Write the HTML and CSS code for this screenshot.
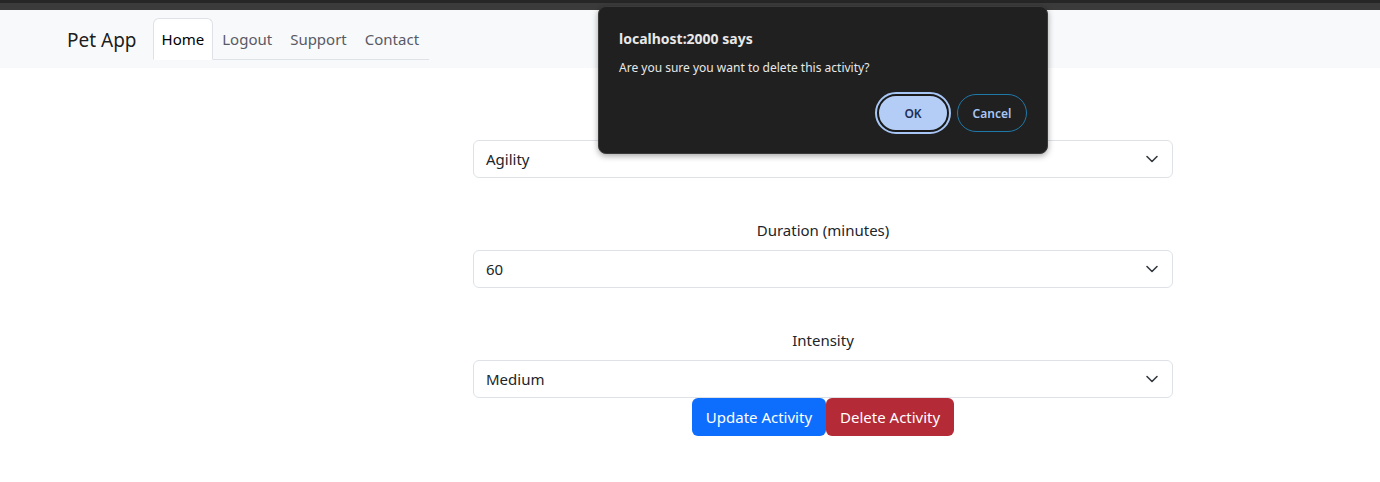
FILE: index.html
```html
<!DOCTYPE html>
<html>
<head>
<meta charset="utf-8">
<link rel="stylesheet" href="styles.css">
</head>
<body>
<div class="chrome"></div>
<nav class="navbar">
  <span class="brand">Pet App</span>
  <ul class="tabs">
    <li class="tab active">Home</li>
    <li class="tab">Logout</li>
    <li class="tab">Support</li>
    <li class="tab">Contact</li>
  </ul>
</nav>
<main class="form">
  <label class="label">Activity</label>
  <div class="select">Agility<svg class="chev" viewBox="0 0 16 16" width="16" height="16"><path d="M3 5.5l5 5 5-5" fill="none" stroke="#343a40" stroke-width="1.6" stroke-linecap="round" stroke-linejoin="round"/></svg></div>
  <label class="label">Duration (minutes)</label>
  <div class="select">60<svg class="chev" viewBox="0 0 16 16" width="16" height="16"><path d="M3 5.5l5 5 5-5" fill="none" stroke="#343a40" stroke-width="1.6" stroke-linecap="round" stroke-linejoin="round"/></svg></div>
  <label class="label">Intensity</label>
  <div class="select last">Medium<svg class="chev" viewBox="0 0 16 16" width="16" height="16"><path d="M3 5.5l5 5 5-5" fill="none" stroke="#343a40" stroke-width="1.6" stroke-linecap="round" stroke-linejoin="round"/></svg></div>
  <div class="buttons">
    <button class="btn primary">Update Activity</button>
    <button class="btn danger">Delete Activity</button>
  </div>
</main>
<div class="dialog">
  <div class="d-title">localhost:2000 says</div>
  <div class="d-msg">Are you sure you want to delete this activity?</div>
  <div class="d-actions">
    <button class="d-btn ok">OK</button>
    <button class="d-btn cancel">Cancel</button>
  </div>
</div>
</body>
</html>
```

FILE: styles.css
```css
* { box-sizing: border-box; }
body {
  margin: 0;
  font-family: "Noto Sans", "Open Sans", sans-serif;
  font-size: 15px;
  color: #212529;
  background: #fff;
}
.chrome {
  height: 10px;
  background: #3b3b3b;
  border-top: 3px solid #262626;
}
.navbar {
  height: 58px;
  background: #f8f9fa;
  display: flex;
  align-items: flex-start;
  padding-left: 67px;
}
.brand {
  font-size: 19px;
  line-height: 30px;
  margin-top: 15px;
  margin-right: 16px;
  color: rgba(0,0,0,0.9);
}
.tabs {
  list-style: none;
  margin: 8px 0 0;
  padding: 0;
  display: flex;
  border-bottom: 1px solid #dee2e6;
  height: 42px;
}
.tab {
  padding: 8px 8px;
  line-height: 24px;
  color: #585a66;
  border: 1px solid transparent;
  border-top-left-radius: 6px;
  border-top-right-radius: 6px;
  margin-bottom: -1px;
}
.tab:last-child { padding-right: 9px; }
.tab.active {
  background: #fff;
  color: #000;
  border-color: #dee2e6 #dee2e6 #fff;
}
.form {
  margin-left: 473px;
  width: 700px;
  padding-top: 40px;
  display: flex;
  flex-direction: column;
}
.label {
  text-align: center;
  line-height: 24px;
  margin-bottom: 8px;
}
.select {
  height: 38px;
  border: 1px solid #dee2e6;
  border-radius: 6px;
  padding: 0 12px;
  display: flex;
  align-items: center;
  justify-content: space-between;
  margin-bottom: 40px;
}
.select.last { margin-bottom: 0; }
.buttons {
  display: flex;
  justify-content: center;
}
.btn {
  font-family: inherit;
  font-size: 15px;
  line-height: 24px;
  padding: 6px 13px;
  border: 1px solid transparent;
  border-radius: 6px;
  color: #fff;
}
.primary { background: #0d6efd; }
.danger { background: #b42a37; }
.dialog {
  position: absolute;
  left: 598px;
  top: 6px;
  width: 450px;
  height: 148px;
  background: #202020;
  border: 1px solid #3a3a3a;
  border-radius: 8px;
  box-shadow: 0 2px 6px rgba(0,0,0,0.35);
  color: #e8e8e8;
  padding: 22px 20px 0 20px;
}
.d-title {
  font-weight: bold;
  font-size: 14px;
  line-height: 20px;
}
.d-msg {
  font-size: 12px;
  line-height: 16px;
  margin-top: 11px;
}
.d-actions {
  display: flex;
  justify-content: flex-end;
  gap: 8px;
  margin-top: 18px;
}
.d-btn {
  font-family: inherit;
  font-size: 12px;
  font-weight: 600;
  height: 38px;
  border-radius: 19px;
}
.ok {
  width: 72px;
  background: #b3cdf6;
  color: #1e2f55;
  border: 2px solid #1a1a1a;
  outline: 2px solid #a8c6f5;
}
.cancel {
  width: 70px;
  background: transparent;
  color: #a8c6f5;
  border: 1px solid #1f79a8;
}
```
